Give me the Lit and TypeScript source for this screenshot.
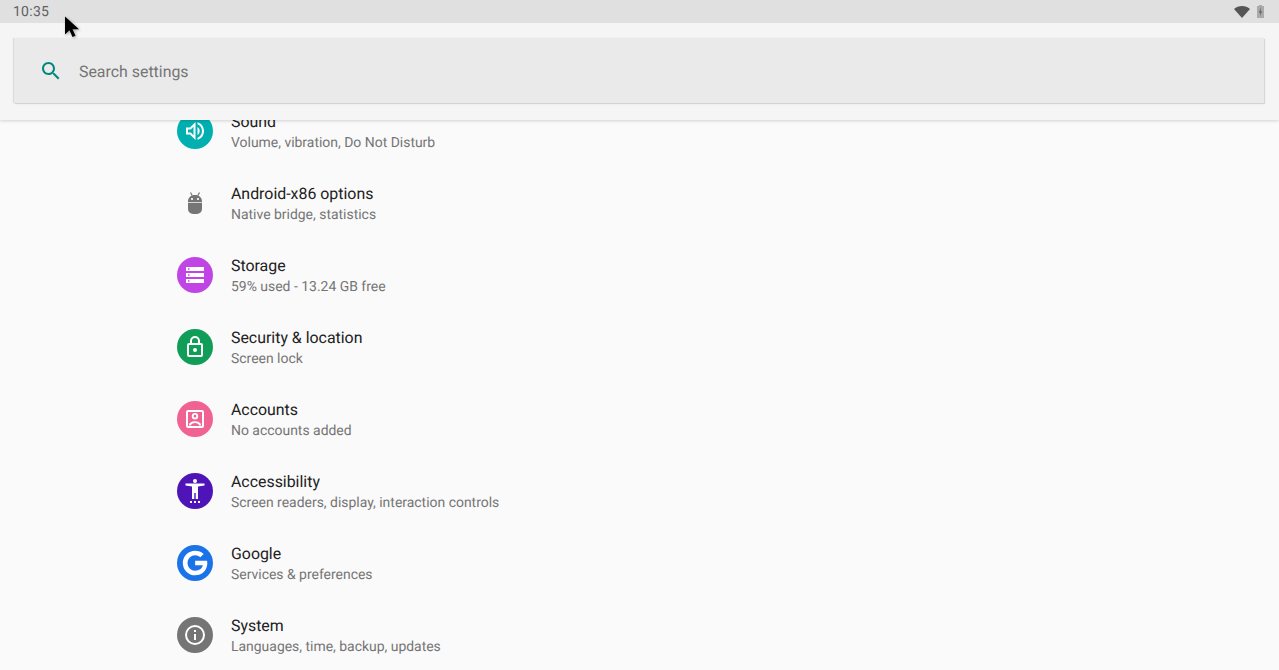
import { LitElement, html, css, svg } from "lit";
import { customElement } from "lit/decorators.js";

const rows = [
  { t: "Sound", s: "Volume, vibration, Do Not Disturb", c: "#00b0b0", i: svg`<path fill="#fff" fill-rule="evenodd" d="M3 8.500v7h4l5.500 5.500V3L7 8.500H3zm2 2h2.800L10.500 7.800v8.400L7.800 13.500H5v-3z"/><path fill="#fff" d="M14.500 3.200v2.100c2.600.9 4.500 3.600 4.500 6.700s-1.900 5.800-4.500 6.700v2.100c3.800-1 6.500-4.500 6.500-8.800s-2.700-7.800-6.500-8.800zM14.500 7.900v8.200c1.300-.8 2.200-2.300 2.200-4.100s-.9-3.300-2.200-4.100z"/>` },
  { t: "Android-x86 options", s: "Native bridge, statistics", c: "transparent", i: svg`<path fill="#757575" d="M5 11.700h14V18a5 5 0 0 1-5 5h-4a5 5 0 0 1-5-5v-6.300zM12 4c4 0 7 2.600 7 6.500v.5H5v-.5C5 6.600 8 4 12 4z"/><path stroke="#757575" stroke-width="1.200" fill="none" d="M7.500 1.500l1.800 3.300M16.500 1.500l-1.800 3.300"/><circle cx="9" cy="8" r="1.100" fill="#fff"/><circle cx="15" cy="8" r="1.100" fill="#fff"/>` },
  { t: "Storage", s: "59% used - 13.24 GB free", c: "#c144e4", i: svg`<path fill="#fff" fill-rule="evenodd" d="M3 4h18v4H3zM5 5.300v1.400h1.500V5.300zM3 10h18v4H3zM5 11.300v1.400h1.500v-1.400zM3 16h18v4H3zM5 17.300v1.400h1.500v-1.400z"/>` },
  { t: "Security & location", s: "Screen lock", c: "#0f9d58", i: svg`<path fill="#fff" fill-rule="evenodd" d="M18 8h-1V6a5 5 0 0 0-10 0v2H6a2 2 0 0 0-2 2v10a2 2 0 0 0 2 2h12a2 2 0 0 0 2-2V10a2 2 0 0 0-2-2zM9 6a3 3 0 0 1 6 0v2H9V6zm9 14H6V10h12v10z"/><circle cx="12" cy="15" r="2" fill="#fff"/>` },
  { t: "Accounts", s: "No accounts added", c: "#f06292", i: svg`<path fill="#fff" fill-rule="evenodd" d="M3 5a2 2 0 0 1 2-2h14a2 2 0 0 1 2 2v14a2 2 0 0 1-2 2H5a2 2 0 0 1-2-2V5zm2 0v14h14V5H5z"/><path fill="#fff" fill-rule="evenodd" d="M12 6a3.200 3.200 0 1 1 0 6.400A3.200 3.200 0 0 1 12 6zm0 1.800a1.400 1.400 0 1 0 0 2.800 1.400 1.400 0 0 0 0-2.800z"/><path fill="#fff" d="M6 18c0-2.500 3.500-3.700 6-3.700s6 1.200 6 3.700v.5h-2v-.5c-.5-1-2.500-1.900-4-1.900s-3.500.9-4 1.900v.5H6V18z"/>` },
  { t: "Accessibility", s: "Screen readers, display, interaction controls", c: "#4e14b8", i: svg`<circle cx="12" cy="2" r="2" fill="#fff"/><path fill="#fff" fill-rule="evenodd" d="M2.500 4.500h19v2L15 7.500V20h-2.300v-6h-1.400v6H9V7.500L2.500 6.500z"/><rect x="7" y="22" width="2" height="2" fill="#fff"/><rect x="11" y="22" width="2" height="2" fill="#fff"/><rect x="15" y="22" width="2" height="2" fill="#fff"/>` },
  { t: "Google", s: "Services & preferences", c: "#1a73e8", i: svg`<g transform="translate(12 12) scale(1.22) translate(-12.100 -12)"><path fill="#fff" d="M12.200 10.200v3.700h6.300c-.6 2.900-3 4.400-6.300 4.400a6.300 6.300 0 0 1 0-12.600c1.700 0 3.100.6 4.300 1.600l2.700-2.700A10.200 10.200 0 0 0 12.200 1.900a10.100 10.100 0 1 0 0 20.200c5.500 0 10-4 10-10.100 0-.6-.1-1.200-.2-1.800h-9.800z"/></g>` },
  { t: "System", s: "Languages, time, backup, updates", c: "#757575", i: svg`<path fill="#fff" fill-rule="evenodd" d="M12 2a10 10 0 1 1 0 20 10 10 0 0 1 0-20zm0 2a8 8 0 1 0 0 16 8 8 0 0 0 0-16z"/><rect x="11" y="11" width="2" height="6" fill="#fff"/><rect x="11" y="7" width="2" height="2" fill="#fff"/>` },
];

@customElement("app-root")
export class AppRoot extends LitElement {
  static styles = css`
    :host { display: block; height: 670px; overflow: hidden; background: #fafafa; position: relative; font-family: Roboto, "Liberation Sans", sans-serif; text-rendering: geometricPrecision; }
    .status { height: 23px; box-sizing: border-box; background: #e0e0e0; display: flex; align-items: center; padding: 0 15px 0 13px; position: relative; z-index: 3; }
    .time { font-size: 14px; color: #616161; letter-spacing: 0.25px; flex: 1; line-height: 23px; padding-top: 1px; }
    .stat { display: flex; align-items: center; gap: 7px; }
    .header { height: 97px; box-sizing: border-box; background: #f5f5f5; padding: 15px 15px 17px 14px; position: relative; z-index: 2; box-shadow: 0 1px 3px rgba(0,0,0,.16); }
    .search { height: 65px; box-sizing: border-box; padding: 1px 0 0 25px; background: #eaeaea; display: flex; align-items: center; box-shadow: 1px 1px 1px rgba(0,0,0,.12), -1px 0 1px rgba(0,0,0,.1); gap: 16px; }
    .search span { font-size: 15.900px; color: #757575; }
    .list { margin-top: -25px; padding-left: 177px; display: flex; flex-direction: column; }
    .row { height: 72px; display: flex; align-items: center; gap: 18px; }
    .ico { width: 36px; height: 36px; border-radius: 50%; display: flex; align-items: center; justify-content: center; flex: none; }
    .ico svg { width: 24px; height: 24px; overflow: visible; }
    .text { display: flex; flex-direction: column; padding-top: 2px; }
    .t { font-size: 15.900px; line-height: 22px; color: #212121; }
    .s { font-size: 13.950px; line-height: 20px; color: #757575; }
    .cursor { position: absolute; left: 62px; top: 14px; z-index: 5; width: 20px; height: 26px; filter: drop-shadow(1px 1px 1.500px rgba(0,0,0,.35)); }
  `;
  render() {
    return html`
      <div class="status">
        <span class="time">10:35</span>
        <div class="stat">
          <svg width="16" height="12" viewBox="0 0 16 12"><path fill="#555" d="M0 3C2 1 5 0 8 0s6 1 8 3l-8 9z"/></svg>
          <svg width="7" height="13" viewBox="0 0 7 13"><path fill="#aaa" d="M2 0h3v1h2v12H0V1h2z"/><path fill="#555" d="M4 2L2 7.500h1.500L3 11l2-4.500H3.500z"/></svg>
        </div>
      </div>
      <div class="header">
        <div class="search">
          <svg width="24" height="24" viewBox="0 0 24 24"><path fill="#00897b" d="M15.500 14h-.79l-.28-.27C15.410 12.590 16 11.110 16 9.500 16 5.910 13.090 3 9.500 3S3 5.910 3 9.500 5.910 16 9.500 16c1.610 0 3.090-.59 4.230-1.570l.27.28v.79l5 4.990L20.490 19l-4.990-5zm-6 0C7.010 14 5 11.990 5 9.500S7.010 5 9.500 5 14 7.010 14 9.500 11.990 14 9.500 14z"/></svg>
          <span>Search settings</span>
        </div>
      </div>
      <div class="list">
        ${rows.map(r => html`
          <div class="row">
            <div class="ico" style="background:${r.c}"><svg viewBox="0 0 24 24">${r.i}</svg></div>
            <div class="text"><span class="t">${r.t}</span><span class="s">${r.s}</span></div>
          </div>`)}
      </div>
      <svg class="cursor" viewBox="0 0 20 26"><path d="M3 2.500v18l4.500-4.200 3 6.700 3-1.300-3-6.500H17z" fill="#000"/></svg>
    `;
  }
}
